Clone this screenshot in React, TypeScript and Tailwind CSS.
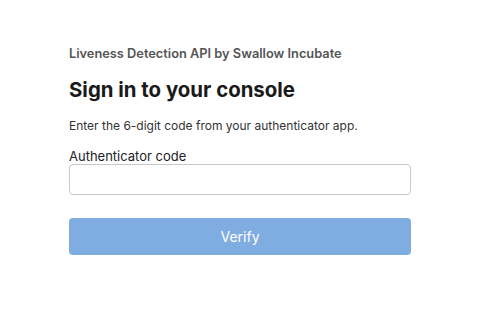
export default function App() {
  return (
    <div className="min-h-screen bg-white" style={{ fontFamily: 'Inter, "Liberation Sans", sans-serif' }}>
      <div className="ml-[69px] w-[342px] pt-[45px]">
        <p className="text-[12.8px] font-semibold leading-[18px] text-[#555]">
          Liveness Detection API by Swallow Incubate
        </p>
        <h1 className="mt-[13px] text-[20.4px] font-bold leading-[28px] text-[#1a1a1a]">
          Sign in to your console
        </h1>
        <p className="mt-[14px] text-[12px] leading-[16px] text-[#333]">
          Enter the 6-digit code from your authenticator app.
        </p>
        <label className="mt-[14px] block text-[13px] leading-[16px] text-[#222]">
          Authenticator code
        </label>
        <input
          type="text"
          className="block h-[31px] w-full rounded-[4px] border border-[#c8c8c8] px-2 text-[13px] outline-none"
        />
        <button
          type="button"
          className="mt-[23px] flex h-[37px] w-full items-center justify-center rounded-[4px] bg-[#7fade2] text-[14px] text-white"
        >
          Verify
        </button>
      </div>
    </div>
  );
}
